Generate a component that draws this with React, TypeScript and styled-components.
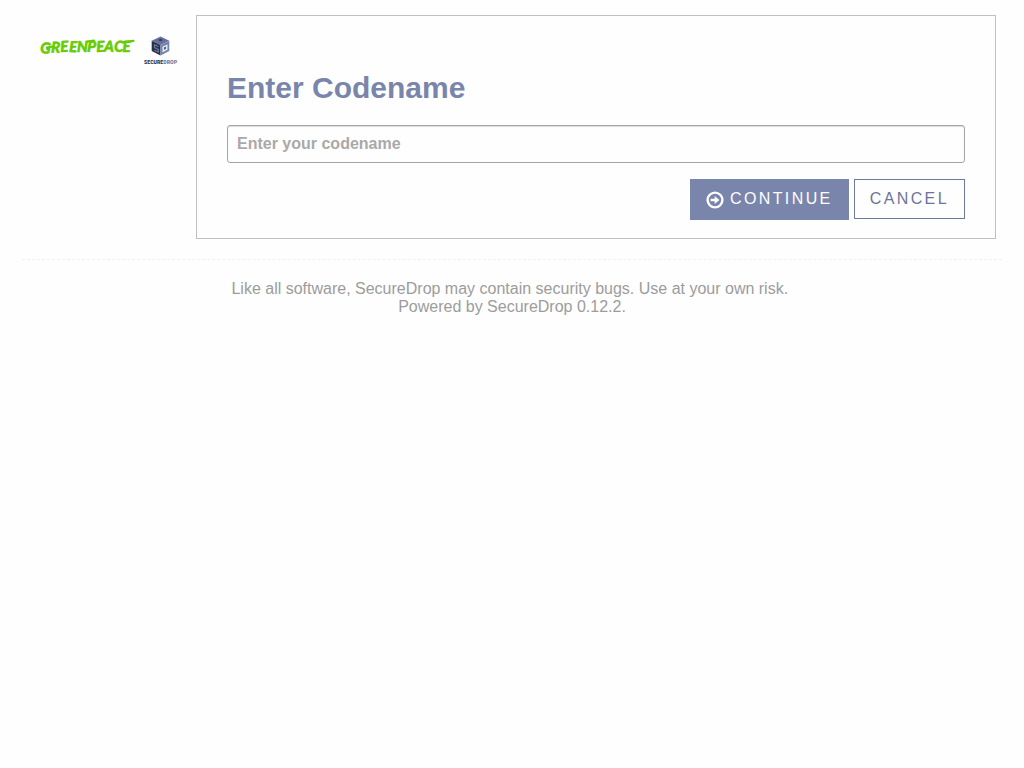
import React from "react";
import styled, { createGlobalStyle } from "styled-components";

const GlobalStyle = createGlobalStyle`
  * { box-sizing: border-box; }
  body {
    margin: 0;
    background: #fefefe;
    color: #9c9c9c;
    font-family: "Liberation Sans", Arial, sans-serif;
    font-size: 16px;
    line-height: 18px;
  }
`;

const Page = styled.div`
  max-width: 1024px;
  margin: 0 auto;
  padding: 15px 22px;
`;

const Columns = styled.div`
  display: flex;
  align-items: flex-start;
  padding-right: 6px;
`;

const Brand = styled.header`
  display: flex;
  flex: 0 0 174px;
  align-items: flex-start;
  gap: 7px;
  padding: 21px 0 0 17px;
`;

const LogoLink = styled.a`
  display: block;
  text-decoration: none;
  svg { display: block; overflow: visible; }
`;

const Panel = styled.main`
  flex: 1;
  min-width: 0;
  padding: 54px 30px 18px;
  border: 1px solid #c0c0c0;
`;

const Title = styled.h1`
  margin: 0 0 20px;
  color: #7a85ab;
  font-size: 30px;
  line-height: 35px;
`;

const CodenameInput = styled.input`
  display: block;
  width: 100%;
  height: 38px;
  padding: 0 9px;
  border: 1px solid #a5a5a5;
  border-radius: 3px;
  background: #fefefe;
  box-shadow: inset 0 1px 1px #ddd;
  color: #555;
  font: bold 16px "Liberation Sans", Arial, sans-serif;
  &::placeholder { color: #a9a9a9; opacity: 1; }
`;

const Actions = styled.div`
  display: flex;
  justify-content: flex-end;
  align-items: flex-start;
  gap: 5px;
  margin-top: 16px;
`;

const actionText = `
  font-family: "Liberation Sans", Arial, sans-serif;
  font-size: 16px;
  line-height: 18px;
  letter-spacing: 0.15em;
  text-transform: uppercase;
  border: 1px solid #7a85ab;
`;

const ContinueButton = styled.button`
  ${actionText}
  display: flex;
  align-items: center;
  gap: 6px;
  height: 41px;
  padding: 0 15px 2px;
  background: #7a85ab;
  color: #fefefe;
  cursor: pointer;
  svg { position: relative; top: 1px; }
`;

const CancelLink = styled.a`
  ${actionText}
  height: 40px;
  padding: 10px 15px;
  border-color: #6b7aa1;
  color: #6b7599;
  text-decoration: none;
`;

const Footer = styled.footer`
  margin-top: 20px;
  padding-top: 20px;
  border-top: 1px dashed #f0f0f0;
  text-align: center;
`;

const GreenpeaceLogo = () => (
  <svg width="97" height="20" viewBox="0 0 97 20" role="img" aria-label="Greenpeace">
    <text
      x="1 12 21.500 30 38 48 57.500 65 75 83.500"
      y="17 16.500 16 16 16 15.500 16 15.500 15.500 15.500"
      rotate="4 2 -3 2 0 3 -2 2 2 0"
      fill="#66cc00"
      stroke="#66cc00"
      strokeWidth="0.7"
      strokeLinejoin="round"
      fontFamily="Lato, sans-serif"
      fontSize="15"
      fontWeight="700"
      fontStyle="italic"
    >
      GREENPEACE
    </text>
    <path d="M48 5.600 L55 4.600 M85 5.800 L94.500 4.800 M8 11.500 L13 10.600" stroke="#66cc00" strokeWidth="2.200" strokeLinecap="round" fill="none" />
  </svg>
);

const SecureDropLogo = () => (
  <svg width="34" height="30" viewBox="0 0 34 30" role="img" aria-label="SecureDrop">
    <path d="M17.500 .5 26.300 4.700 17.500 8.900 8.700 4.700Z" fill="#65719b" />
    <path d="M8.700 4.700 17.500 8.900V19.500L8.700 15Z" fill="#263248" />
    <path d="M26.300 4.700 17.500 8.900V19.500L26.300 15Z" fill="#7683ae" />
    <path d="M15 3.900 17.500 2.800 20 3.900 17.500 5.200Z" fill="#303b57" />
    <path d="M15.500 10.500 11.500 8.900V11.600L15.300 13.400V16L11.300 14.200" fill="none" stroke="#6e7a9e" strokeWidth="1.100" />
    <path d="M20.200 11 23.800 9.400V13.400L20.200 15.200Z" fill="#586690" stroke="#f0f3fa" strokeWidth="1.300" />
    <text x="1" y="28" fontFamily="'Roboto Condensed', 'Liberation Sans Narrow', sans-serif" fontSize="6" fontWeight="700" fill="#222e43">
      SECURE<tspan fill="#68769f">DROP</tspan>
    </text>
  </svg>
);

const ArrowCircle = () => (
  <svg width="18" height="18" viewBox="0 0 18 18" aria-hidden="true">
    <circle cx="9" cy="9" r="7.400" fill="none" stroke="#fefefe" strokeWidth="2.400" />
    <path d="M4.600 7.700H8.700V4.900L13.400 9 8.700 13.100V10.300H4.600Z" fill="#fefefe" />
  </svg>
);

export default function App() {
  return (
    <>
      <GlobalStyle />
      <Page>
        <Columns>
          <Brand>
            <LogoLink href="#"><GreenpeaceLogo /></LogoLink>
            <LogoLink href="#"><SecureDropLogo /></LogoLink>
          </Brand>
          <Panel>
            <Title>Enter Codename</Title>
            <form onSubmit={(e) => e.preventDefault()}>
              <CodenameInput
                type="text"
                name="codename"
                aria-label="Enter your codename"
                placeholder="Enter your codename"
                autoComplete="off"
              />
              <Actions>
                <ContinueButton type="submit">
                  <ArrowCircle />
                  Continue
                </ContinueButton>
                <CancelLink href="#">Cancel</CancelLink>
              </Actions>
            </form>
          </Panel>
        </Columns>
        <Footer>
          Like all software, SecureDrop may contain security bugs. Use at your own risk.&nbsp;
          <br />
          Powered by SecureDrop 0.12.2.
        </Footer>
      </Page>
    </>
  );
}
